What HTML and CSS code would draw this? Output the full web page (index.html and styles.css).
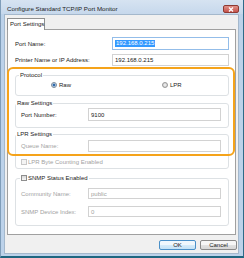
FILE: index.html
```html
<!DOCTYPE html>
<html lang="en">
<head>
    <meta charset="UTF-8">
    <meta name="viewport" content="width=device-width, initial-scale=1.0">
    <title>Configure Standard TCP/IP Port Monitor</title>
    <link rel="stylesheet" href="styles.css">
</head>
<body>

<div class="window">
    <div class="titlebar">
        <span class="title">Configure Standard TCP/IP Port Monitor</span>
        <span class="close">
            <svg width="6" height="5" viewBox="0 0 6 5"><path d="M1 0.5 L5 4.5 M5 0.5 L1 4.5" stroke="#fff" stroke-width="1.3"/></svg>
        </span>
    </div>

    <div class="client">
        <div class="tabs"><div class="tab">Port Settings</div></div>

        <div class="panel">
            <div class="field top">
                <label>Port Name:</label>
                <div class="input focused"><span class="selected">192.168.0.215</span></div>
            </div>
            <div class="field top second">
                <label>Printer Name or IP Address:</label>
                <div class="input">192.168.0.215</div>
            </div>

            <fieldset class="group protocol">
                <legend>Protocol</legend>
                <div class="radios">
                    <span class="option"><span class="radio checked"></span>Raw</span>
                    <span class="option"><span class="radio"></span>LPR</span>
                </div>
            </fieldset>

            <fieldset class="group raw">
                <legend>Raw Settings</legend>
                <div class="field">
                    <label>Port Number:</label>
                    <div class="input">9100</div>
                </div>
            </fieldset>

            <fieldset class="group lpr">
                <legend>LPR Settings</legend>
                <div class="field disabled">
                    <label>Queue Name:</label>
                    <div class="input"></div>
                </div>
                <div class="check disabled"><span class="box"></span>LPR Byte Counting Enabled</div>
            </fieldset>

            <fieldset class="group snmp">
                <legend><span class="box"></span>SNMP Status Enabled</legend>
                <div class="field disabled">
                    <label>Community Name:</label>
                    <div class="input">public</div>
                </div>
                <div class="field disabled">
                    <label>SNMP Device Index:</label>
                    <div class="input">0</div>
                </div>
            </fieldset>
        </div>

        <div class="buttons">
            <button class="btn default">OK</button>
            <button class="btn">Cancel</button>
        </div>
    </div>

    <!-- orange annotation around the protocol settings -->
    <div class="highlight"></div>
</div>

</body>
</html>
```

FILE: styles.css
```css
body {
    margin: 0;
    font-family: "Liberation Sans", Arial, sans-serif;
    font-size: 6px;
    color: #222;
}

.window {
    position: relative;
    width: 244px;
    height: 258px;
    box-sizing: border-box;
    background-color: #bcd2ea;
    border-left: 1px solid #7f9db9;
    border-right: 1px solid #2e6a88;
    border-bottom: 2px solid #1f6680;
}

.titlebar {
    display: flex;
    align-items: center;
    height: 14px;
    box-sizing: border-box;
    padding: 2px 0 0 6px;
    background: linear-gradient(#d6e3f1, #c6d8ec);
}

.title {
    font-size: 6.2px;
    color: #222;
    white-space: nowrap;
}

.close {
    display: flex;
    align-items: center;
    justify-content: center;
    align-self: flex-start;
    width: 16px;
    height: 8px;
    box-sizing: border-box;
    margin: 3px 4px 0 auto;
    border: 1px solid #8d3a33;
    border-radius: 2px;
    background: linear-gradient(#e0928a, #c6524a);
}

.client {
    width: 235px;
    height: 240px;
    box-sizing: border-box;
    margin-left: 3px;
    border: 1px solid #a4b8cc;
    background-color: #f0f0f0;
}

.tabs {
    padding: 3px 0 0 2px;
}

.tab {
    position: relative;
    z-index: 1;
    width: 38px;
    height: 12px;
    box-sizing: border-box;
    margin-bottom: -1px;
    padding-left: 2px;
    border: 1px solid #8e8f8f;
    border-bottom: 0;
    background-color: white;
    line-height: 10px;
    white-space: nowrap;
}

.panel {
    width: 229px;
    height: 206px;
    box-sizing: border-box;
    margin-left: 2px;
    padding: 7px 6px 0 7px;
    border: 1px solid #a0a0a0;
    background-color: white;
}

.field {
    display: flex;
    align-items: center;
    height: 12px;
    white-space: nowrap;
}

.field label {
    width: 67px;
    flex-shrink: 0;
}

.input {
    flex: 1;
    height: 100%;
    box-sizing: border-box;
    padding-left: 2px;
    border: 1px solid #d2d2d2;
    background-color: white;
    display: flex;
    align-items: center;
}

.field.top {
    height: 13px;
}

.field.top label {
    width: 97px;
}

.field.top.second {
    height: 12px;
    margin-top: 4px;
}

.input.focused {
    border-color: #93bde9;
}

.selected {
    background-color: #3399ff;
    color: white;
    padding: 0 1px;
    line-height: 7px;
}

.disabled {
    color: #a2a2a2;
}

.group {
    margin: 0;
    padding: 0;
    min-width: 0;
    border: 1px solid #dde1e4;
    border-radius: 3px;
}

.group legend {
    padding: 0 1px;
    line-height: 8px;
    white-space: nowrap;
}

.group .field {
    padding: 0 7px 0 5px;
}

.protocol {
    margin-top: 5px;
}

.protocol legend {
    margin-left: 3px;
}

.radios {
    display: grid;
    grid-template-columns: 111px 1fr;
    align-items: center;
    height: 12px;
    margin-bottom: 4px;
    padding-left: 35px;
}

.option {
    display: flex;
    align-items: center;
}

.radio {
    width: 6px;
    height: 6px;
    box-sizing: border-box;
    margin-right: 2px;
    border: 1px solid #979797;
    border-radius: 50%;
    background: radial-gradient(#f4f4f4, #c6c6c6);
}

.radio.checked {
    border-color: #7a8a9a;
    background: radial-gradient(#17508f 0, #3f7cc0 1.2px, #dfe6ee 1.8px);
}

.raw {
    margin-top: 3px;
}

.raw .field {
    height: 13px;
    margin: 1px 0 6px;
}

.lpr {
    margin-top: 2px;
    padding-bottom: 1px;
}

.lpr .field {
    margin-top: 2px;
}

.check {
    display: flex;
    align-items: center;
    height: 10px;
    margin-top: 5px;
    padding-left: 5px;
    white-space: nowrap;
}

.box {
    width: 6px;
    height: 6px;
    box-sizing: border-box;
    margin-right: 1px;
    border: 1px solid #8e8e8e;
    background: linear-gradient(#d8d8d8, #f8f8f8);
}

.check.disabled .box {
    border-color: #c8c8c8;
    background: #f4f4f4;
}

.snmp {
    margin-top: 5px;
    padding-bottom: 8px;
}

.snmp legend {
    display: flex;
    align-items: center;
    margin-left: 4px;
}

.snmp .field {
    height: 11px;
    margin-top: 7px;
}

.snmp .field:first-of-type {
    margin-top: 6px;
}

.buttons {
    display: flex;
    justify-content: flex-end;
    gap: 4px;
    margin-top: 5px;
    padding-right: 1px;
}

.btn {
    width: 37px;
    height: 10px;
    box-sizing: border-box;
    padding: 0;
    border: 1px solid #8a8a8a;
    border-radius: 2px;
    background: linear-gradient(#f6f6f6 50%, #e2e2e2 50%, #d6d6d6);
    font: inherit;
    color: #222;
    line-height: 8px;
}

.btn.default {
    border-color: #4a90c8;
    background: linear-gradient(#f0f8fd 50%, #d6ecfa 50%, #c4e2f6);
}

.highlight {
    position: absolute;
    left: 6px;
    top: 67px;
    width: 228px;
    height: 89px;
    box-sizing: border-box;
    border: 2px solid #f5a31a;
    border-radius: 6px;
}
```
